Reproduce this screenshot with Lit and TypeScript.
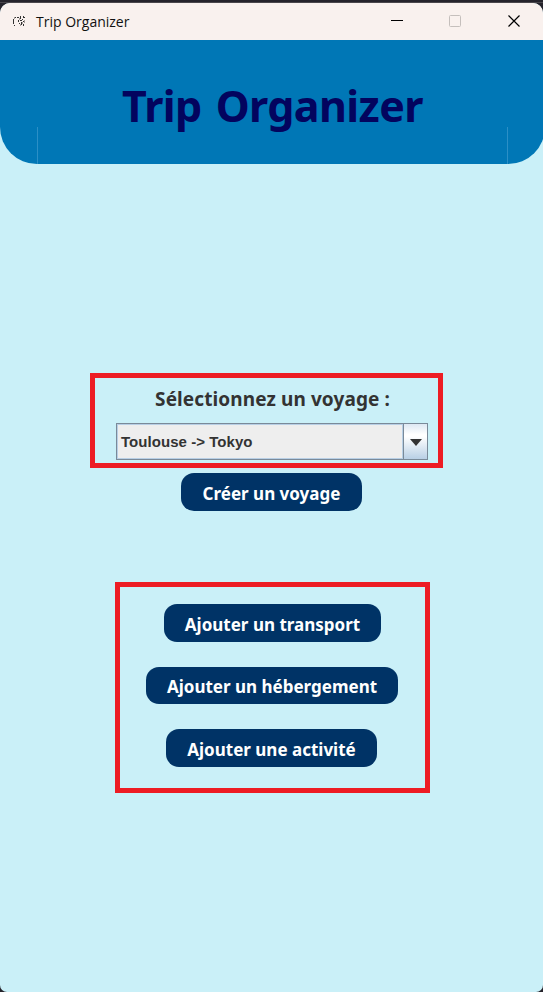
import { LitElement, html, css } from "lit";
import { customElement } from "lit/decorators.js";

@customElement("app-root")
export class AppRoot extends LitElement {
  static styles = css`
    :host { display: block; height: 992px; width: 543px; background: #25232b; overflow: hidden;
      font-family: "Noto Sans", "Open Sans", sans-serif; }
    * { box-sizing: border-box; }
    .window { display: flex; flex-direction: column; height: 992px; padding-top: 3px; background: linear-gradient(#25232b 0 2px, #4a474c 2px 3px, #25232b 3px); }
    .frame { display: flex; flex-direction: column; flex: 1; background: #caf0f8; border-radius: 10px 10px 7px 7px; overflow: hidden; }
    .bar { display: flex; align-items: center; height: 37px; background: #f9f1ee; padding-left: 12px; }
    .bar svg { display: block; flex: none; }
    .name { font-size: 14px; line-height: 20px; color: #111; margin-left: 10px; flex: 1; white-space: nowrap; font-family: "Open Sans", sans-serif; }
    .header { display: flex; justify-content: space-between; align-items: flex-end; height: 124px; margin-right: -2px; background: #0077b6; border-radius: 0 0 37px 37px; padding: 0 37px; }
    .seam { width: 1px; height: 37px; background: #2b8fc6; }
    h1 { margin: 0; align-self: flex-start; padding-top: 36px; font-size: 43px; line-height: 60px; font-weight: 700; letter-spacing: -0.6px; word-spacing: 3.5px; color: #03045e; white-space: nowrap; }
    .content { display: flex; flex-direction: column; align-items: flex-start; }
    .select { width: 353px; height: 95px; border: 5px solid #ed1c24; margin: 209px 0 0 90px; padding: 6px 10px 0 21px; }
    .label { height: 30px; line-height: 30px; font-size: 19px; font-weight: 700; letter-spacing: 0.1px; padding-left: 1px; color: #333; text-align: center; white-space: nowrap; }
    .combo { display: flex; width: 312px; height: 37px; margin-top: 9px; border: 1px solid #7a8a99; }
    .value { flex: 1; border: 1px solid #b8cfe5; background: #eee; color: #333; font: bold 15px/34px "Liberation Sans", sans-serif; letter-spacing: 0.05px; padding-left: 3px; }
    .arrow { width: 24px; border-left: 1px solid #7a8a99; background: linear-gradient(#dde8f3, #fff 30%, #fff 36%, #b8cfe5); display: flex; align-items: center; justify-content: center; padding-top: 1px; }
    button { display: block; border: 0; padding: 3px 0 0; margin: 0; height: 38px; border-radius: 13px; background: #036; color: #fff; font: 700 17px/34px "Noto Sans", sans-serif; white-space: nowrap; text-align: center; }
    .create { width: 181px; margin: 5px 0 0 181px; }
    .actions { width: 315px; height: 211px; border: 5px solid #ed1c24; margin: 71px 0 0 115px; padding: 17px 1px 0 0; display: flex; flex-direction: column; align-items: center; gap: 25px; }
    .transport { width: 217px; margin-left: 1px; }
    .lodging { width: 252px; height: 37px; }
    .activity { width: 211px; margin-right: 1px; }
  `;
  render() {
    return html`<div class="window"><div class="frame">
      <div class="bar">
        <svg width="14" height="14" viewBox="0 0 14 14" fill="none" stroke="#333" stroke-width="1">
          <path d="M3.5 2V3M1.5 4V9M2.5 10V11M5 2.5H7M6.5 5V7M7.5 8V9M8.5 1V4M8 5.5H10M9.5 7V10M11.5 1V3M10.5 4V5M11.5 6V7M11.5 9V11M12.5 2V3"/>
          <path d="M2.5 2V4M7.5 3V5M10.5 7V9M8.5 9V11M12.5 5V8" stroke="#a39c99"/>
        </svg>
        <span class="name">Trip Organizer</span>
        <svg width="153" height="37" viewBox="390 3 153 37" fill="none">
          <path d="M391 20.5h12" stroke="#000"/>
          <rect x="449.5" y="15.5" width="11" height="11" rx="1" stroke="#c5bfbc"/>
          <path d="M508.5 15.5l11 11m0-11l-11 11" stroke="#000" stroke-width="1.2"/>
        </svg>
      </div>
      <div class="header"><div class="seam"></div><h1>Trip Organizer</h1><div class="seam"></div></div>
      <div class="content">
        <div class="select">
          <div class="label">Sélectionnez un voyage :</div>
          <div class="combo"><div class="value">Toulouse -&gt; Tokyo</div>
            <div class="arrow"><svg width="12" height="7" viewBox="0 0 12 7"><path d="M0 0h12L6 7z" fill="#333"/></svg></div></div>
        </div>
        <button class="create">Créer un voyage</button>
        <div class="actions">
          <button class="transport">Ajouter un transport</button>
          <button class="lodging">Ajouter un hébergement</button>
          <button class="activity">Ajouter une activité</button>
        </div>
      </div>
    </div></div>`;
  }
}
